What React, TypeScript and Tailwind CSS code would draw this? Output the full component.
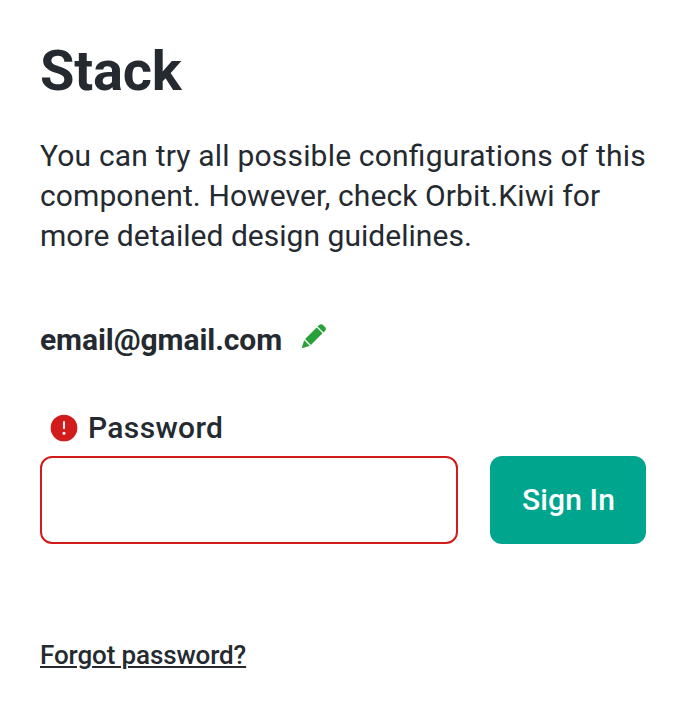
import React from 'react';

function EditIcon() {
  return (
    <svg viewBox="0 0 24 24" className="h-6 w-6 fill-[#28a138]" aria-hidden="true">
      <path d="M17.2.9a3 3 0 0 1 4 .3l1.6 1.6a3 3 0 0 1 .3 4L21.5 8.4 15.6 2.5zM14.7 3.5l5.8 5.8L8.9 20.9l-5.8-5.8zM2.2 16.2l5.6 5.6L.9 24a.7.7 0 0 1-.9-.9z" />
    </svg>
  );
}

function AlertIcon() {
  return (
    <svg viewBox="0 0 24 24" className="size-8" aria-hidden="true">
      <circle cx="12" cy="12" r="10" fill="#d21c1c" />
      <path d="M12 7.5v4.6" stroke="white" strokeWidth="1.4" strokeLinecap="round" />
      <circle cx="12" cy="16" r="1.15" fill="white" />
    </svg>
  );
}

export default function App() {
  return (
    <main className="flex h-[712px] w-[686px] flex-col bg-white px-10 pt-[39px] font-['Roboto',sans-serif] text-[#252a31]">
      <h1 className="text-[56px] leading-[64px] font-bold tracking-[-0.2px]">Stack</h1>
      <p className="mt-[33px] text-[30px] leading-10 whitespace-nowrap [font-feature-settings:'liga']">
        <span className="tracking-[0.19px]">You can try all possible configurations of this</span><br />
        <span className="tracking-[0.1px]">component. However, check Orbit.Kiwi for</span><br />
        <span className="tracking-[0.03px]">more detailed design guidelines.</span>
      </p>
      <div className="mt-16 flex h-10 items-center gap-5">
        <span className="text-[30px] leading-10 font-bold tracking-[-0.08px]">email@gmail.com</span>
        <button aria-label="Edit email" className="-mt-2"><EditIcon /></button>
      </div>
      <form className="mt-12 flex items-end gap-8">
        <div className="w-[418px]">
          <label htmlFor="password" className="flex h-10 items-center gap-2 pl-2 text-[30px] leading-10 font-medium tracking-[0.35px]">
            <AlertIcon />Password
          </label>
          <input id="password" type="password" className="mt-2 block h-[88px] w-full rounded-xl border-2 border-[#d21c1c]" />
        </div>
        <button type="button" className="h-[88px] w-[156px] rounded-xl bg-[#00a58e] pb-0.5 pl-px text-[30px] font-medium tracking-[0.1px] text-white">Sign In</button>
      </form>
      <a href="#" className="mt-[95px] self-start text-[26px] leading-8 font-medium tracking-[-0.12px] underline decoration-2 underline-offset-2">Forgot password?</a>
    </main>
  );
}
